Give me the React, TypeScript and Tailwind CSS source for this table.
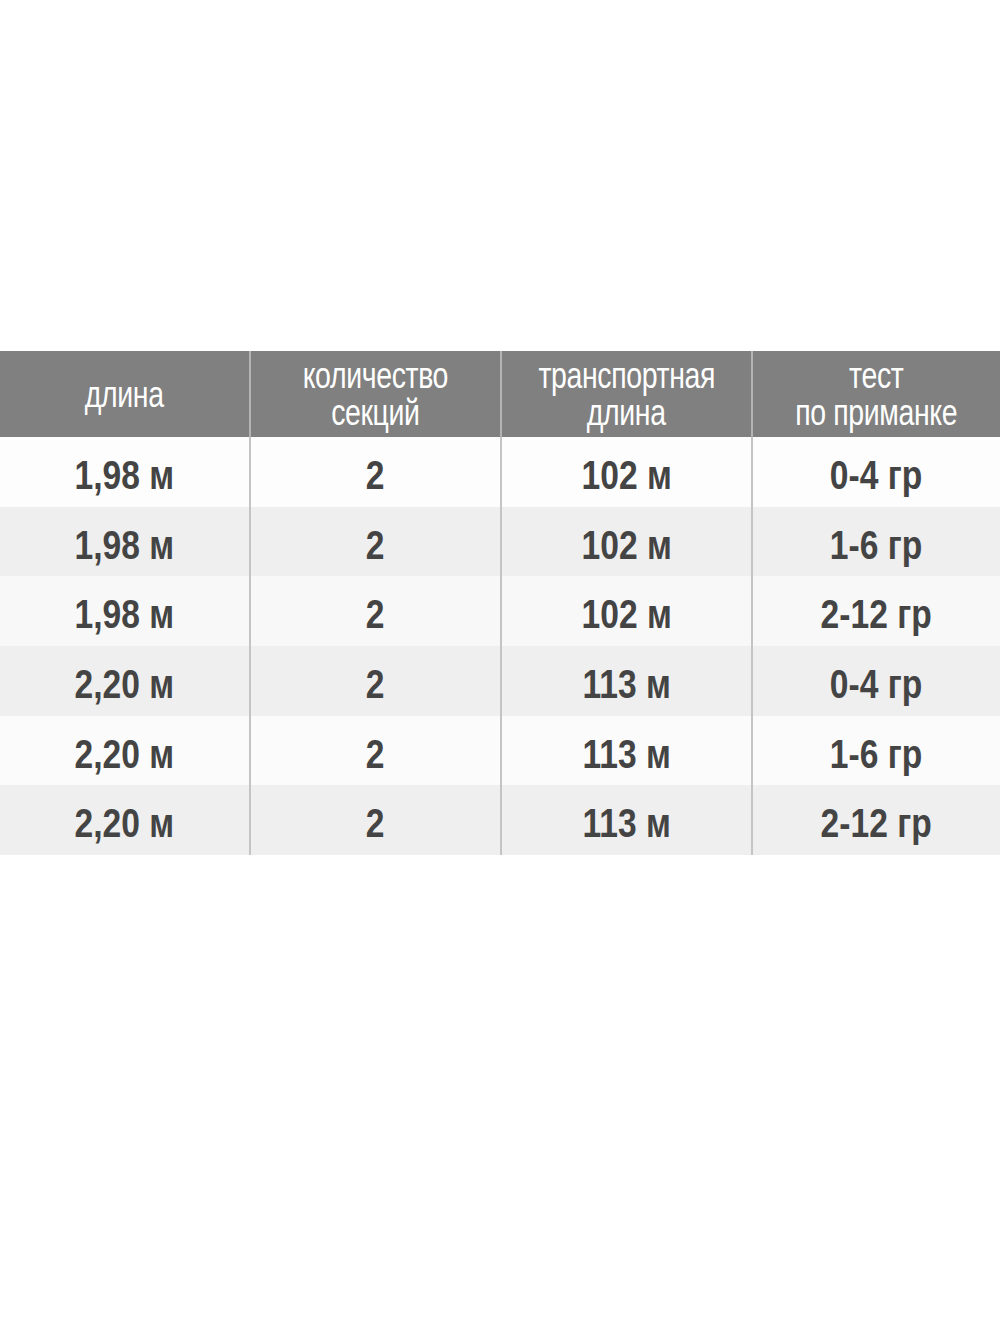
import React from "react";

const rows = [
  ["1,98 м", "2", "102 м", "0-4 гр"],
  ["1,98 м", "2", "102 м", "1-6 гр"],
  ["1,98 м", "2", "102 м", "2-12 гр"],
  ["2,20 м", "2", "113 м", "0-4 гр"],
  ["2,20 м", "2", "113 м", "1-6 гр"],
  ["2,20 м", "2", "113 м", "2-12 гр"],
];

const rowBg = ["bg-[#fdfdfd]", "bg-[#efefef]", "bg-[#f8f8f8]", "bg-[#efefef]", "bg-[#fbfbfb]", "bg-[#efefef]"];

const headers = [["длина"], ["количество", "секций"], ["транспортная", "длина"], ["тест", "по приманке"]];

export default function App() {
  return (
    <div className="w-[1000px] h-[1333px] bg-white pt-[351px]" style={{ fontFamily: '"Liberation Sans", Arial, sans-serif' }}>
      <div className="grid grid-cols-[249px_2px_249px_2px_249px_2px_247px] h-[86px] bg-[#808080]">
        {headers.map((h, i) => (
          <React.Fragment key={i}>
            {i > 0 && <div className="bg-[#b4b4b4]" />}
            <div className="flex flex-col items-center justify-center text-white text-[37px] leading-[37px] tracking-[-0.5px]">
              {h.map((l, j) => (
                <span key={j} className="inline-block whitespace-nowrap scale-x-[0.77]">{l}</span>
              ))}
            </div>
          </React.Fragment>
        ))}
      </div>
      {rows.map((r, ri) => (
        <div key={ri} className={`grid grid-cols-[249px_2px_249px_2px_249px_2px_247px] h-[69.7px] ${rowBg[ri]}`}>
          {r.map((c, ci) => (
            <React.Fragment key={ci}>
              {ci > 0 && <div className="bg-[#c4c4c4]" />}
              <div className="flex items-center justify-center text-[#444444] text-[40px] font-bold pt-[6px]">
                <span className="inline-block whitespace-nowrap scale-x-[0.84]">{c}</span>
              </div>
            </React.Fragment>
          ))}
        </div>
      ))}
    </div>
  );
}
